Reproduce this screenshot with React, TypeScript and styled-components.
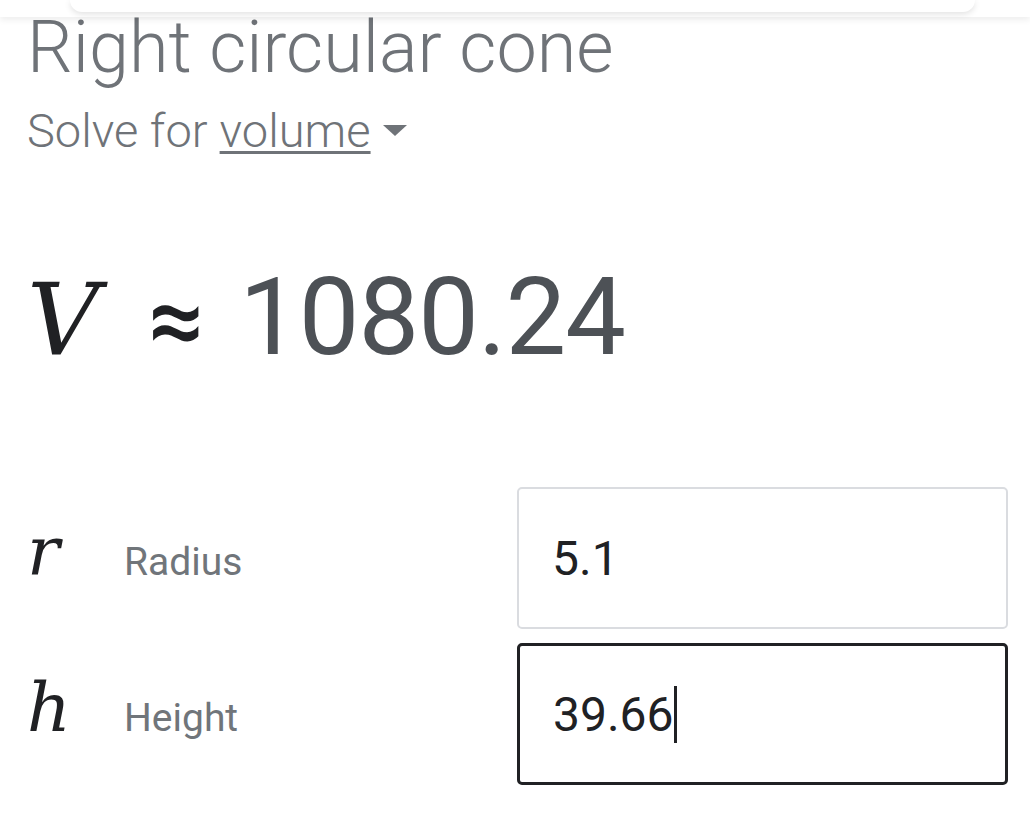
import React from "react";
import styled, { createGlobalStyle } from "styled-components";

const Global = createGlobalStyle`
  html, body { margin: 0; padding: 0; background: #fff; }
  body { font-family: Roboto, "Noto Sans", Arial, sans-serif; }
`;

const Page = styled.div`
  width: 1030px;
  height: 825px;
  overflow: hidden;
  display: flex;
  flex-direction: column;
`;

const TopBar = styled.div`
  height: 17px;
  flex: none;
  display: flex;
  padding: 0 55px 0 70px;
  background: #fff;
  box-shadow: 0 3px 6px rgba(0, 0, 0, 0.07);
  position: relative;
  z-index: 1;
`;

const TopCard = styled.div`
  flex: 1;
  height: 12px;
  border-radius: 0 0 24px 24px;
  box-shadow: 0 2px 6px rgba(0, 0, 0, 0.12);
  background: #fff;
`;

const Content = styled.div`
  padding: 0 22px 0 27px;
  display: flex;
  flex-direction: column;
`;

const Title = styled.div`
  font-weight: 300;
  font-size: 72px;
  line-height: 60px;
  color: #6f7378;
  margin-top: 1px;
  white-space: nowrap;
`;

const Solve = styled.div`
  display: flex;
  align-items: baseline;
  font-weight: 300;
  font-size: 47px;
  line-height: 47px;
  color: #6f7378;
  margin-top: 29px;
  white-space: nowrap;
`;

const Link = styled.span`
  margin-left: 12px;
  text-decoration: underline;
  text-decoration-thickness: 3px;
  text-underline-offset: 4px;
`;

const Caret = styled.span`
  align-self: center;
  width: 0;
  height: 0;
  margin: 0 0 0 12px;
  border-left: 12px solid transparent;
  border-right: 12px solid transparent;
  border-top: 11px solid #6f7378;
`;

const Result = styled.div`
  display: flex;
  align-items: baseline;
  margin-top: 109px;
  white-space: nowrap;
`;

const Var = styled.span<{ $size: number }>`
  font-family: "DejaVu Serif", "Liberation Serif", serif;
  font-style: italic;
  font-size: ${(p) => p.$size}px;
  line-height: 1;
  color: #202124;
`;

const Approx = styled.span`
  font-size: 98px;
  line-height: 1;
  font-weight: 500;
  color: #202124;
  margin: 0 35px 0 49px;
`;

const Value = styled.span`
  font-size: 108px;
  line-height: 1;
  color: #4d5156;
  letter-spacing: -1px;
`;

const Fields = styled.div`
  display: flex;
  flex-direction: column;
  gap: 14px;
  margin-top: 116px;
`;

const Row = styled.div`
  display: flex;
  align-items: baseline;
`;

const Symbol = styled.div`
  width: 97px;
  flex: none;
`;

const Label = styled.div`
  flex: 1;
  font-size: 39px;
  color: #70757a;
`;

const Box = styled.div<{ $focused?: boolean }>`
  box-sizing: border-box;
  width: 491px;
  height: 142px;
  display: flex;
  align-items: center;
  padding-left: 33px;
  border: ${(p) => (p.$focused ? "3px solid #202124" : "2px solid #dadce0")};
  border-radius: 5px;
  font-size: 48px;
  color: #202124;
`;

const Cursor = styled.span`
  display: inline-block;
  width: 3px;
  height: 57px;
  background: #202124;
`;

export default function App() {
  return (
    <Page>
      <Global />
      <TopBar>
        <TopCard />
      </TopBar>
      <Content>
        <Title>Right circular cone</Title>
        <Solve>
          Solve for<Link>volume</Link>
          <Caret />
        </Solve>
        <Result>
          <Var $size={100}>V</Var>
          <Approx>≈</Approx>
          <Value>1080.24</Value>
        </Result>
        <Fields>
          <Row>
            <Symbol>
              <Var $size={68}>r</Var>
            </Symbol>
            <Label>Radius</Label>
            <Box>5.1</Box>
          </Row>
          <Row>
            <Symbol>
              <Var $size={68}>h</Var>
            </Symbol>
            <Label>Height</Label>
            <Box $focused>
              39.66
              <Cursor />
            </Box>
          </Row>
        </Fields>
      </Content>
    </Page>
  );
}
